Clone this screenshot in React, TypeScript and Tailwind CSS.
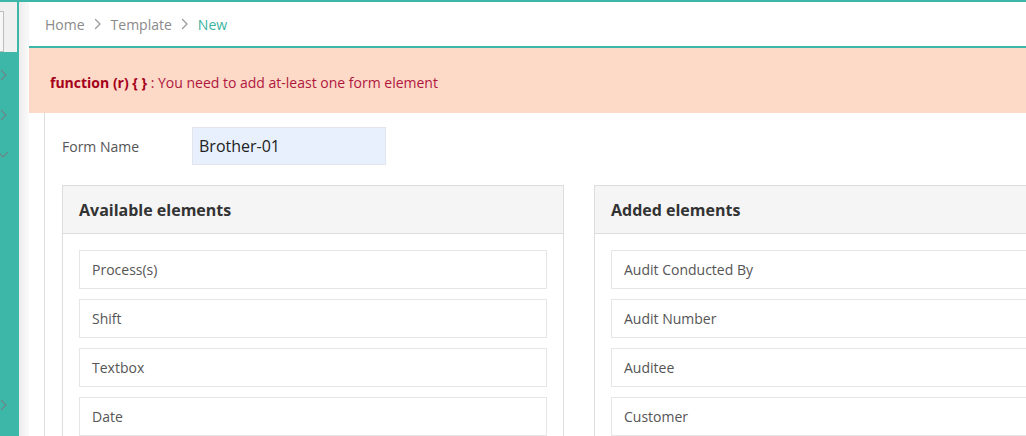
import React from "react";

const Chevron = ({ className = "" }: { className?: string }) => (
  <svg width="14" height="14" viewBox="0 0 14 14" className={className} fill="none">
    <path d="M4.5 2.5 L9 7 L4.5 11.5" stroke="currentColor" strokeWidth="1.3" strokeLinecap="round" strokeLinejoin="round" />
  </svg>
);

const ChevronDown = ({ className = "" }: { className?: string }) => (
  <svg width="14" height="14" viewBox="0 0 14 14" className={className} fill="none">
    <path d="M2.5 4.5 L7 9 L11.5 4.5" stroke="currentColor" strokeWidth="1.3" strokeLinecap="round" strokeLinejoin="round" />
  </svg>
);

const Panel = ({ title, items }: { title: string; items: string[] }) => (
  <div className="w-[502px] shrink-0 flex flex-col">
    <div className="h-[49px] border border-[#dddddd] bg-[#f5f5f5] flex items-center pl-[16px]">
      <span className="text-[16px] font-bold text-[#333333]">{title}</span>
    </div>
    <div className="border-x border-[#dddddd] px-[16px] pt-[16px] flex flex-col gap-[10px]">
      {items.map((it) => (
        <div key={it} className="h-[39px] shrink-0 border border-[#e6e6e6] flex items-center pl-[12px] text-[14px] text-[#555555]">
          {it}
        </div>
      ))}
    </div>
  </div>
);

export default function App() {
  return (
    <div className="w-[1026px] h-[436px] overflow-hidden flex flex-col bg-white font-['Open_Sans',sans-serif]">
      <div className="h-[2px] shrink-0 bg-[#3db8a8]" />
      <div className="flex flex-1 min-h-0">
        {/* Sidebar */}
        <div className="w-[19px] shrink-0 bg-[#3db8a8] flex flex-col text-[#678a8c]">
          <div className="w-[17px] h-[50px] bg-[#f0f0f0] pt-[9px]">
            <div className="w-[4px] h-[41px] border-y border-r border-[#bdbdbd] bg-[#f7f7f7]" />
          </div>
          <div className="ml-[-3px] mt-[16px]">
            <Chevron />
          </div>
          <div className="ml-[-3px] mt-[26px]">
            <Chevron />
          </div>
          <div className="ml-[-4px] mt-[26px]">
            <ChevronDown />
          </div>
          <div className="ml-[-3px] mt-[236px]">
            <Chevron />
          </div>
        </div>
        {/* Shadow strip */}
        <div className="w-[10px] shrink-0 bg-gradient-to-r from-[#ececec] to-[#fbfbfb]" />
        {/* Main */}
        <div className="flex-1 min-w-0 flex flex-col">
          <div className="h-[44px] shrink-0 flex items-center pl-[16px] gap-[6px] text-[14px] shadow-[0_1px_2px_rgba(0,0,0,0.08)]">
            <span className="text-[#8a8a8a]">Home</span>
            <Chevron className="text-[#9a9a9a]" />
            <span className="text-[#8a8a8a]">Template</span>
            <Chevron className="text-[#9a9a9a]" />
            <span className="text-[#3bb3a3]">New</span>
          </div>
          <div className="h-[2px] shrink-0 bg-[#3db8a8]" />
          <div className="h-[65px] shrink-0 bg-[#fdd9c8] flex items-center pl-[21px] pt-[3px] text-[14px]">
            <span className="font-bold text-[#a5001a]">function (r) {"{ }"}</span>
            <span className="text-[#b0173d]">&nbsp;: You need to add at-least one form element</span>
          </div>
          <div className="flex flex-1 min-h-0">
            <div className="w-[15px] shrink-0" />
            <div className="w-px shrink-0 bg-[#dddddd]" />
            <div className="flex-1 min-w-0 pl-[17px] flex flex-col">
              <div className="flex items-center mt-[14px] h-[38px] shrink-0">
                <span className="w-[130px] shrink-0 text-[14px] text-[#555555]">Form Name</span>
                <div className="w-[194px] h-[38px] bg-[#e8f0fe] border border-[#e2e6ec] flex items-center pl-[6px] text-[16px] text-[#222222]">
                  Brother-01
                </div>
              </div>
              <div className="flex gap-[30px] mt-[20px]">
                <Panel title="Available elements" items={["Process(s)", "Shift", "Textbox", "Date"]} />
                <Panel title="Added elements" items={["Audit Conducted By", "Audit Number", "Auditee", "Customer"]} />
              </div>
            </div>
          </div>
        </div>
      </div>
    </div>
  );
}
